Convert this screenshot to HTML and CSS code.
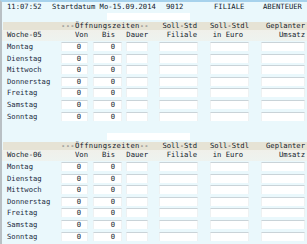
FILE: index.html
```html
<!DOCTYPE html>
<html lang="de">
<head>
    <meta charset="UTF-8">
    <title>Öffnungszeiten</title>
    <link rel="stylesheet" href="styles.css">
</head>
<body>
    <div class="screen">
        <div class="title-row">
            <span class="t-time">11:07:52</span>
            <span class="t-start">Startdatum Mo-15.09.2014</span>
            <span class="t-nr">9012</span>
            <span class="t-fil">FILIALE</span>
            <span class="t-name">ABENTEUER</span>
        </div>

        <div class="week" id="week05">
            <div class="spacer"><div class="blank-field"></div></div>
            <div class="row band">
                <div class="c-day"></div>
                <div class="c-open">---Öffnungszeiten--</div>
                <div class="c-fil">Soll-Std</div>
                <div class="c-eur">Soll-Stdl</div>
                <div class="c-ums">Geplanter</div>
            </div>
            <div class="row sub">
                <div class="c-day">Woche-05</div>
                <div class="c-von">Von</div>
                <div class="c-bis">Bis</div>
                <div class="c-dau">Dauer</div>
                <div class="c-fil">Filiale</div>
                <div class="c-eur">in Euro</div>
                <div class="c-ums">Umsatz</div>
            </div>
            <div class="days"></div>
        </div>

        <div class="week" id="week06">
            <div class="spacer"><div class="blank-field"></div></div>
            <div class="row band">
                <div class="c-day"></div>
                <div class="c-open">---Öffnungszeiten--</div>
                <div class="c-fil">Soll-Std</div>
                <div class="c-eur">Soll-Stdl</div>
                <div class="c-ums">Geplanter</div>
            </div>
            <div class="row sub">
                <div class="c-day">Woche-06</div>
                <div class="c-von">Von</div>
                <div class="c-bis">Bis</div>
                <div class="c-dau">Dauer</div>
                <div class="c-fil">Filiale</div>
                <div class="c-eur">in Euro</div>
                <div class="c-ums">Umsatz</div>
            </div>
            <div class="days"></div>
        </div>
    </div>

    <script>
        var dayNames = ["Montag", "Dienstag", "Mittwoch", "Donnerstag", "Freitag", "Samstag", "Sonntag"];
        var cols = ["c-von", "c-bis", "c-dau", "c-fil", "c-eur", "c-ums"];

        function renderDays(container) {
            dayNames.forEach(function(name) {
                var row = document.createElement("div");
                row.className = "row day";

                var label = document.createElement("div");
                label.className = "c-day";
                label.innerHTML = name;
                row.appendChild(label);

                cols.forEach(function(col, i) {
                    var cell = document.createElement("div");
                    cell.className = col;
                    var field = document.createElement("div");
                    field.className = "field";
                    if (i < 2) {
                        field.innerHTML = "0";
                    }
                    cell.appendChild(field);
                    row.appendChild(cell);
                });

                container.appendChild(row);
            });
        }

        document.querySelectorAll(".days").forEach(renderDays);
    </script>
</body>
</html>
```

FILE: styles.css
```css
body {
    margin: 0;
    padding: 0;
    background-color: #eaf8fc;
    font-family: "DejaVu Sans Mono", monospace;
    font-size: 7.2px;
    color: #121a2c;
}

.screen {
    width: 307px;
    height: 244px;
    overflow: hidden;
    box-sizing: border-box;
    border-top: 2px solid #a7d2ec;
    border-left: 2px solid #b9c0c4;
}

.title-row {
    position: relative;
    height: 10px;
    line-height: 10px;
}

.title-row span {
    position: absolute;
    top: 0;
}

.t-time { left: 5px; }
.t-start { left: 50px; }
.t-nr { left: 164px; }
.t-fil { left: 212px; }
.t-name { left: 261px; }

.week {
    height: 120px;
}

.spacer {
    height: 10px;
    padding-top: 1px;
    box-sizing: border-box;
}

.blank-field {
    margin-left: 105px;
    width: 83px;
    height: 7px;
    background-color: #fff;
}

.row {
    display: flex;
    white-space: nowrap;
}

.row > div {
    box-sizing: border-box;
    text-align: right;
}

.c-day { width: 59px; text-align: left !important; padding-left: 5px; }
.c-von { width: 27px; }
.c-bis { width: 34px; padding-left: 5px; padding-right: 7px; }
.c-dau { width: 26px; padding-left: 4px; }
.c-fil { width: 50px; padding-left: 11px; padding-right: 1px; }
.c-eur { width: 51px; padding-left: 12px; }
.c-ums { width: 56px; padding-left: 12px; }
.c-open { width: 87px; letter-spacing: 0.3px; }

.band {
    height: 8px;
    line-height: 8px;
    background-color: #e6e3d5;
    margin-left: 1px;
}

.band .c-day { width: 58px; }

.sub {
    height: 11px;
    line-height: 10px;
    background: linear-gradient(#f0f0ea, #eef3f0);
}

.sub .c-eur { padding-right: 6px; }

.day {
    height: 11.6px;
}

.day .c-bis { padding-right: 0; }
.day .c-fil { padding-right: 0; }

.day .c-day {
    line-height: 11px;
    color: #222b3e;
}

.field {
    margin-top: 1px;
    height: 9px;
    line-height: 8px;
    box-sizing: border-box;
    background-color: #fff;
    border-top: 1px solid #c9d3d8;
    border-left: 1px solid #eef1f2;
    border-right: 1px solid #eef1f2;
    padding-right: 6px;
    text-align: right;
}
```
